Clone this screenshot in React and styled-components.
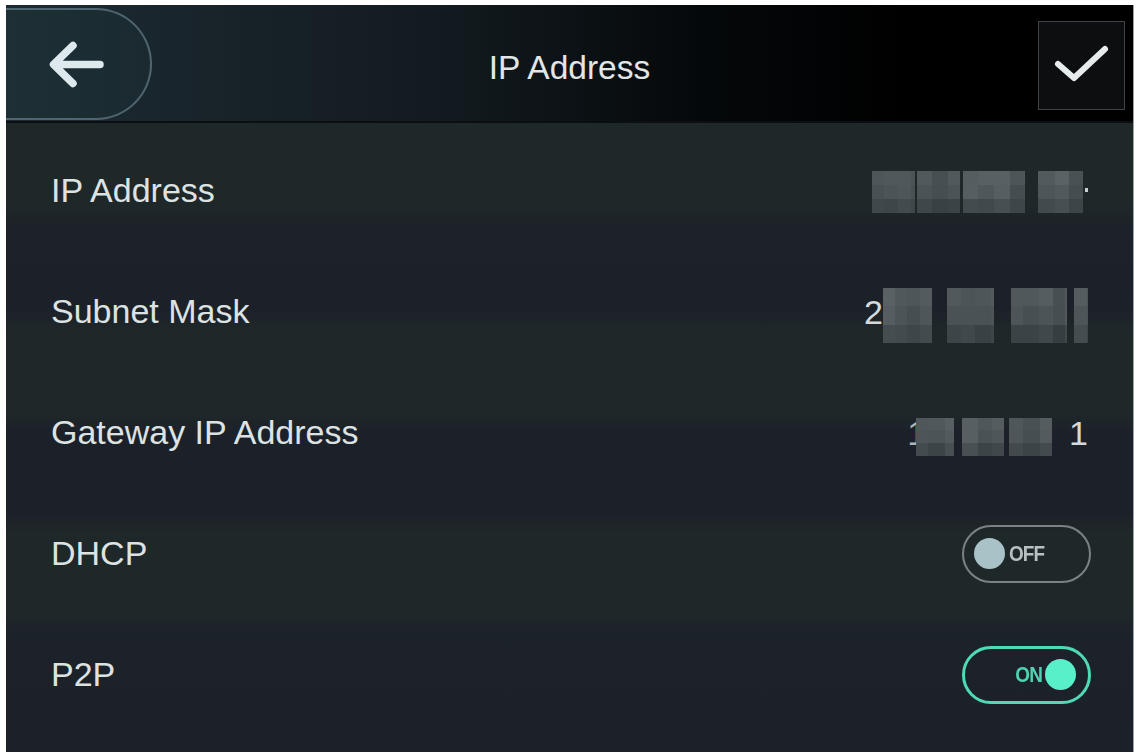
import React from "react";
import styled, { createGlobalStyle } from "styled-components";

const Global = createGlobalStyle`
  html, body { margin: 0; padding: 0; background: #ffffff; }
  body { font-family: "Liberation Sans", Arial, sans-serif; }
`;

const Frame = styled.div`
  width: 1137px;
  height: 754px;
  box-sizing: border-box;
  padding: 5px 3px 2px 6px;
  background: #ffffff;
`;

const Screen = styled.div`
  width: 1128px;
  height: 747px;
  display: flex;
  flex-direction: column;
  overflow: hidden;
  background: #1d2429;
  border-right: 1px solid #9aa0a3;
  box-sizing: border-box;
`;

const Header = styled.header`
  height: 118px;
  flex: none;
  position: relative;
  display: flex;
  align-items: center;
  justify-content: space-between;
  padding-right: 8px;
  background: linear-gradient(90deg, #1c2b32 0%, #1b282f 8%, #121a1f 40%, #05080a 62%, #000000 80%, #000 100%);
  border-bottom: 2px solid #0b0f12;
  box-sizing: border-box;
`;

const BackButton = styled.button`
  width: 146px;
  height: 112px;
  margin-top: 2px;
  align-self: center;
  display: flex;
  align-items: center;
  padding: 4px 0 0 40px;
  box-sizing: border-box;
  background: linear-gradient(90deg, #1e2f36 0%, #1b2a31 100%);
  border: 2px solid rgba(120, 150, 165, 0.55);
  border-left: none;
  border-radius: 0 56px 56px 0;
  cursor: pointer;
`;

const Title = styled.h1`
  position: absolute;
  left: 0;
  right: 0;
  top: 0;
  bottom: 0;
  margin: 0;
  padding-top: 10px;
  box-sizing: border-box;
  display: flex;
  align-items: center;
  justify-content: center;
  pointer-events: none;
  font-family: "Liberation Sans", Arial, sans-serif;
  font-weight: 400;
  font-size: 33.5px;
  color: #e2e6e7;
`;

const ConfirmButton = styled.button`
  width: 87px;
  height: 89px;
  margin-top: 4px;
  display: flex;
  align-items: center;
  justify-content: center;
  background: #0c0e0f;
  border: 1.5px solid #3d4347;
  box-sizing: border-box;
  padding: 0;
  cursor: pointer;
`;

const List = styled.div`
  flex: 1;
  display: flex;
  flex-direction: column;
  padding-top: 7px;
  background: linear-gradient(
    180deg,
    #1f2829 0px,
    #1f2829 80px,
    #1c2229 105px,
    #1c2129 185px,
    #1f2829 210px,
    #1f2829 288px,
    #1c2129 310px,
    #1c2129 390px,
    #1f2829 412px,
    #1f2829 488px,
    #1c2229 510px,
    #1c2129 629px
  );
`;

const Row = styled.div`
  height: 121px;
  flex: none;
  display: flex;
  align-items: center;
  justify-content: space-between;
  padding: 0 ${(p) => (p.$toggle ? 42 : 45)}px 0 45px;
  box-sizing: border-box;
`;

const Label = styled.span`
  font-family: "Liberation Sans", Arial, sans-serif;
  font-size: 34px;
  color: #dde2e3;
`;

const Value = styled.div`
  display: flex;
  align-items: center;
  font-family: "Liberation Sans", Arial, sans-serif;
  font-size: 34px;
  color: #d4dadb;
`;

const Digit = styled.span`
  line-height: 1;
  color: ${(p) => (p.$faint ? "#aeb5b8" : "#d4dadb")};
  margin-left: ${(p) => p.$ml || 0}px;
`;

const Mosaic = styled.div`
  display: flex;
  align-items: stretch;
  height: ${(p) => p.$h}px;
  margin-left: ${(p) => p.$ml || 0}px;
  margin-top: ${(p) => p.$mt || 0}px;
  filter: blur(0.6px);
`;

const MosaicCol = styled.div`
  display: flex;
  flex-direction: column;
  flex: none;
`;

const Cell = styled.div`
  flex: 1;
`;

const Dot = styled.span`
  width: 3px;
  height: 4px;
  background: #c9d0d2;
  margin-left: 2px;
  margin-top: -2px;
`;

const Toggle = styled.div`
  width: 129px;
  height: 58px;
  box-sizing: border-box;
  border-radius: 29px;
  border: ${(p) => (p.$on ? "3px solid #4fdab6" : "2.5px solid #7b8286")};
  display: flex;
  align-items: center;
  justify-content: ${(p) => (p.$on ? "flex-end" : "flex-start")};
  padding: ${(p) => (p.$on ? "0 12px 0 0" : "0 0 0 10px")};
  gap: ${(p) => (p.$on ? 3 : 4)}px;
`;

const Knob = styled.span`
  width: 31px;
  height: 31px;
  border-radius: 50%;
  background: ${(p) => (p.$on ? "#58f0c8" : "#a8c2c7")};
  flex: none;
`;

const ToggleText = styled.span`
  display: inline-block;
  font-family: "Liberation Sans", Arial, sans-serif;
  font-weight: 700;
  font-size: 22px;
  letter-spacing: -1px;
  transform: scaleX(0.86);
  transform-origin: ${(p) => (p.$on ? "right" : "left")} center;
  margin: ${(p) => (p.$on ? "0 0 0 -4px" : "0 -6px 0 0")};
  color: ${(p) => (p.$on ? "#4fd4b2" : "#b7c0c2")};
`;

function seeded(seed) {
  let s = seed;
  return () => {
    s = (s * 16807) % 2147483647;
    return s / 2147483647;
  };
}

function grey(v) {
  const r = Math.round(v);
  const g = Math.round(v + 7);
  const b = Math.round(v + 11);
  return `rgb(${r},${g},${b})`;
}

function buildColumns(segments, seed) {
  const rnd = seeded(seed);
  const cols = [];
  let cursor = 0;
  segments.forEach(([start, end]) => {
    if (start > cursor) cols.push({ gap: true, w: start - cursor });
    let x = start;
    while (x < end) {
      const w = Math.min(end - x, 12 + Math.floor(rnd() * 6));
      const base = 66 + rnd() * 14;
      cols.push({
        w,
        cells: [grey(base + 4 + rnd() * 8), grey(base + rnd() * 8), grey(base - 12 + rnd() * 6)],
      });
      x += w;
    }
    cursor = end;
  });
  return cols;
}

function Pixelated({ segments, seed, h, ml, mt }) {
  const cols = buildColumns(segments, seed);
  return (
    <Mosaic $h={h} $ml={ml} $mt={mt}>
      {cols.map((c, i) =>
        c.gap ? (
          <MosaicCol key={i} style={{ width: c.w }} />
        ) : (
          <MosaicCol key={i} style={{ width: c.w }}>
            {c.cells.map((col, j) => (
              <Cell key={j} style={{ background: col }} />
            ))}
          </MosaicCol>
        )
      )}
    </Mosaic>
  );
}

const BackArrow = () => (
  <svg width="58" height="52" viewBox="0 0 58 52" fill="none">
    <path
      d="M54 24.5H10 M27 5.5L7.5 24.5L27 43.5"
      stroke="#dde9ed"
      strokeWidth="7.5"
      strokeLinecap="round"
      strokeLinejoin="round"
    />
  </svg>
);

const CheckIcon = () => (
  <svg width="60" height="46" viewBox="0 0 60 46" fill="none">
    <path
      d="M6 22L22 36L53 7"
      stroke="#e6ecec"
      strokeWidth="6"
      strokeLinecap="round"
      strokeLinejoin="round"
    />
  </svg>
);

export default function App() {
  return (
    <>
      <Global />
      <Frame>
        <Screen>
          <Header>
            <BackButton aria-label="Back">
              <BackArrow />
            </BackButton>
            <Title>IP Address</Title>
            <ConfirmButton aria-label="Confirm">
              <CheckIcon />
            </ConfirmButton>
          </Header>
          <List>
            <Row>
              <Label>IP Address</Label>
              <Value>
                <Pixelated
                  segments={[[0, 43], [45, 88], [91, 153], [166, 211]]}
                  seed={11}
                  h={42}
                  mt={2}
                />
                <Dot />
              </Value>
            </Row>
            <Row>
              <Label>Subnet Mask</Label>
              <Value>
                <Digit>2</Digit>
                <Pixelated
                  segments={[[0, 49], [64, 111], [128, 184], [191, 205]]}
                  seed={37}
                  h={55}
                  mt={8}
                />
              </Value>
            </Row>
            <Row>
              <Label>Gateway IP Address</Label>
              <Value>
                <Digit $faint>1</Digit>
                <Pixelated
                  segments={[[0, 38], [46, 88], [93, 136]]}
                  seed={73}
                  h={38}
                  ml={-10}
                  mt={8}
                />
                <Digit $ml={17}>1</Digit>
              </Value>
            </Row>
            <Row $toggle>
              <Label>DHCP</Label>
              <Toggle>
                <Knob />
                <ToggleText>OFF</ToggleText>
              </Toggle>
            </Row>
            <Row $toggle>
              <Label>P2P</Label>
              <Toggle $on>
                <ToggleText $on>ON</ToggleText>
                <Knob $on />
              </Toggle>
            </Row>
          </List>
        </Screen>
      </Frame>
    </>
  );
}
